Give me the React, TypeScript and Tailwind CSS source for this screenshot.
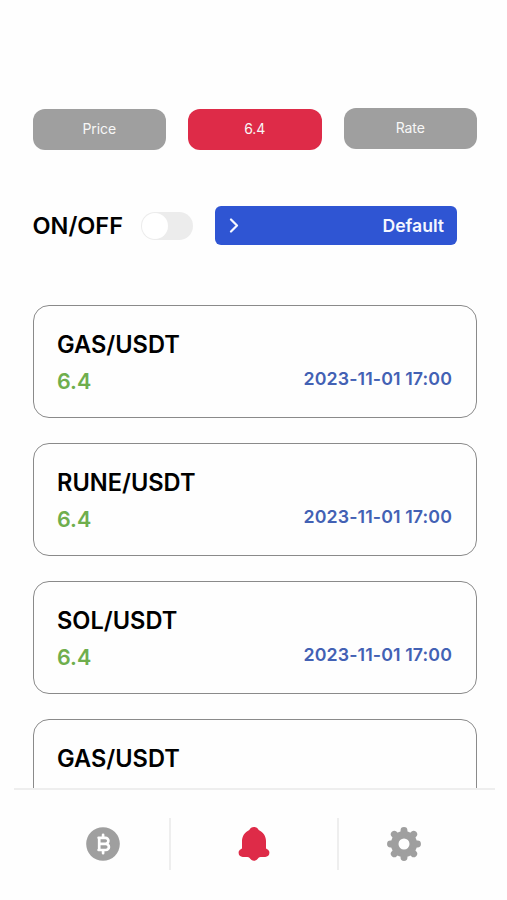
const filters = [
  { label: "Price", className: "mt-px bg-[#9f9f9f]" },
  { label: "6.4", className: "mt-px bg-[#de2b48]" },
  { label: "Rate", className: "bg-[#9f9f9f]" },
];

type Alert = { pair: string; value?: string; time?: string };

const alerts: Alert[] = [
  { pair: "GAS/USDT", value: "6.4", time: "2023-11-01 17:00" },
  { pair: "RUNE/USDT", value: "6.4", time: "2023-11-01 17:00" },
  { pair: "SOL/USDT", value: "6.4", time: "2023-11-01 17:00" },
  { pair: "GAS/USDT" },
];

function AlertCard({ pair, value, time }: Alert) {
  return (
    <article className="h-[113px] shrink-0 rounded-2xl border-[1.5px] border-[#8a8a8a] pt-[23px] pr-6 pl-[23px]">
      <h2 className="text-[23.6px] leading-8 font-semibold text-black">{pair}</h2>
      {value && (
        <div className="flex items-start justify-between">
          <span className="mt-[4px] text-[21.5px] leading-8 font-semibold text-[#6fae4d]">{value}</span>
          <time className="mt-[2px] text-[17.8px] leading-8 font-semibold tracking-[0.1px] text-[#4361b4]">{time}</time>
        </div>
      )}
    </article>
  );
}

function CoinIcon() {
  return (
    <svg className="size-[34px]" viewBox="0 0 34 34" fill="none">
      <circle cx="17" cy="17" r="16.8" fill="#9f9f9f" />
      <path
        d="M12.6 10.8h6.8a3 3 0 0 1 0 6h-5.4 5.8a3.1 3.1 0 0 1 0 6.2h-7.2M13.2 10.8V23M17.1 7.8v3M17.1 23v3.2"
        stroke="#fff"
        strokeWidth="2.7"
        strokeLinecap="round"
        strokeLinejoin="round"
      />
    </svg>
  );
}

function BellIcon() {
  return (
    <svg className="size-[34px]" viewBox="0 0 34 34" fill="#de2b48">
      <path d="M17 0c2.2 0 3.8 1 4.7 2.9 4.6 2.1 7.3 6.2 7.3 11.2v6.7c0 .8.4 1.2 1.100 1.5 1.5.6 2.3 1.9 2.3 3.5 0 2.5-1.7 4.1-4.2 4.1h-4.600c-.9 0-1.4.3-2 .9-1.4 1.8-2.800 2.9-4.600 2.9s-3.200-1.100-4.600-2.900c-.6-.6-1.100-.9-2-.9H5.8c-2.500 0-4.200-1.600-4.200-4.100 0-1.600.8-2.900 2.300-3.500.7-.3 1.100-.7 1.100-1.500v-6.700c0-5 2.700-9.100 7.300-11.200C13.200 1 14.800 0 17 0Z" />
    </svg>
  );
}

function GearIcon() {
  return (
    <svg className="size-[34px]" viewBox="0 0 34 34" fill="none" stroke="#9f9f9f">
      <circle cx="17" cy="17" r="9.3" strokeWidth="7.6" />
      <path
        d="M17 3.5v3M17 27.5v3M3.5 17h3M27.5 17h3M7.3 7.3l2 2M24.7 24.7l2 2M26.7 7.3l-2 2M9.3 24.7l-2 2"
        strokeWidth="6.9"
        strokeLinecap="round"
      />
    </svg>
  );
}

export default function App() {
  return (
    <div className="flex h-[900px] w-[507px] flex-col overflow-hidden bg-[#fefefe] font-['Inter','Liberation_Sans',sans-serif]">
      <div className="flex items-start gap-[22px] pt-[108px] pl-[32.5px]">
        {filters.map((f) => (
          <button
            key={f.label}
            className={`flex h-[41px] w-[133.5px] items-center justify-center rounded-[12px] pb-[2px] text-[14px] tracking-[-0.1px] text-[#f7f7f7] ${f.className}`}
          >
            {f.label}
          </button>
        ))}
      </div>

      <div className="mt-14 flex h-[39px] items-center pl-[32.5px]">
        <span className="w-[108.5px] text-[23.5px] font-semibold text-black">ON/OFF</span>
        <button
          role="switch"
          aria-checked="false"
          aria-label="Alerts"
          className="mt-px flex h-7 w-[52px] items-center rounded-full bg-[#ececec] pl-px"
        >
          <span className="size-[26px] rounded-full bg-white" />
        </button>
        <button className="ml-[21.5px] flex h-[39px] w-[242.5px] items-center justify-between rounded-md bg-[#2f55d3] pr-[13px] pl-[14px] text-[17.6px] font-semibold text-[#f5f7ff]">
          <svg className="h-4 w-3" viewBox="0 0 12 16" fill="none" stroke="currentColor" strokeWidth="2.2">
            <path d="m2 1.5 6 6L2 13.5" strokeLinecap="round" strokeLinejoin="round" />
          </svg>
          <span className="pt-px">Default</span>
        </button>
      </div>

      <main className="mt-[60px] flex h-[483px] shrink-0 flex-col gap-[25px] overflow-hidden pr-[30px] pl-[33px]">
        {alerts.map((a, i) => (
          <AlertCard key={i} {...a} />
        ))}
      </main>

      <nav className="mr-3 ml-3.5 flex grow items-start border-t-2 border-[#eeeeee]">
        <div className="mt-7 flex h-[52px] w-[156.5px] items-center justify-end border-r-2 border-[#eeeeee] pr-[48.5px]">
          <CoinIcon />
        </div>
        <div className="mt-7 flex h-[52px] w-[168.5px] items-center justify-center border-r-2 border-[#eeeeee]">
          <BellIcon />
        </div>
        <div className="mt-7 flex h-[52px] items-center pl-[48px]">
          <GearIcon />
        </div>
      </nav>
    </div>
  );
}
